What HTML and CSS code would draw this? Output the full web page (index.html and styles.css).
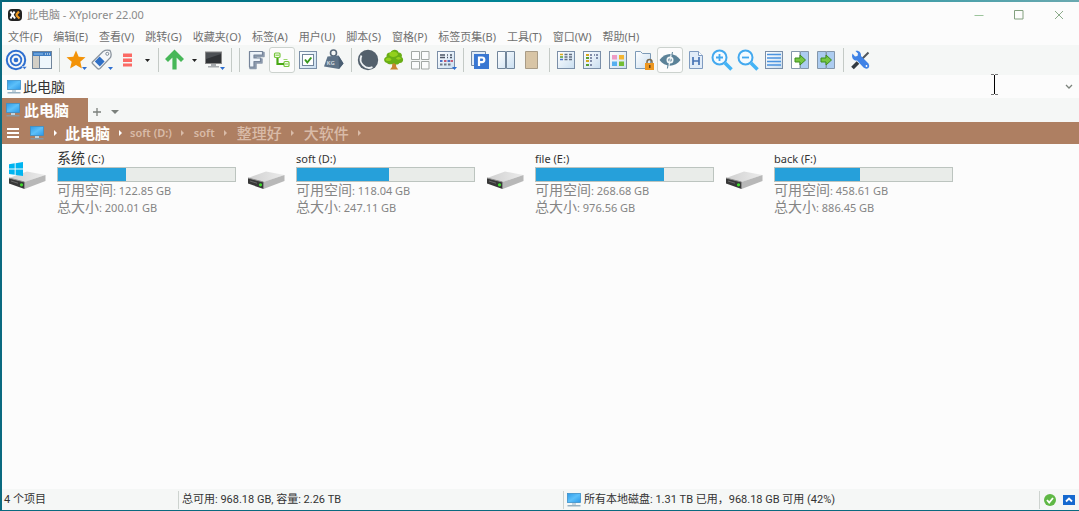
FILE: index.html
```html
<!DOCTYPE html>
<html lang="zh-CN">
<head>
<meta charset="utf-8">
<title>此电脑 - XYplorer 22.00</title>
<link rel="stylesheet" href="styles.css">
</head>
<body>
<svg class="defs" aria-hidden="true">
  <defs>
    <linearGradient id="g-screen" x1="0" y1="0" x2="1" y2="1"><stop offset="0" stop-color="#2f9be8"/><stop offset=".5" stop-color="#5cc0fa"/><stop offset="1" stop-color="#2b98e8"/></linearGradient>
    <linearGradient id="g-page" x1="0" y1="0" x2="1" y2="1"><stop offset="0" stop-color="#fff"/><stop offset="1" stop-color="#c9def0"/></linearGradient>
    <linearGradient id="g-top" x1="0" y1="0" x2="1" y2="0"><stop offset="0" stop-color="#cfcfcf"/><stop offset="1" stop-color="#ececec"/></linearGradient>
    <symbol id="pc" viewBox="0 0 16 16"><rect x="1.500" y="1.500" width="13" height="9" fill="url(#g-screen)" stroke="#3c8fc8" stroke-width=".8"/><path d="M6 11h4v2H6z" fill="#c2d2dc"/><path d="M1.500 13.800h13" stroke="#7f9fb4" stroke-width="1.200"/></symbol>
    <symbol id="drive" viewBox="0 0 40 32"><path d="M2 17 20 10.500 38.500 14 18 21z" fill="url(#g-top)"/><path d="M17.500 21 38.500 14V20L17.500 28z" fill="#b8b8b8"/><path d="M2 17 17.500 21V28L2 22.500z" fill="#383838"/><path d="M2 17 17.500 21" stroke="#8c8c8c"/><path d="M4 20l7 2.200" stroke="#6a6a6a"/><circle cx="14.500" cy="23.800" r="1.600" fill="#3fdc2e"/></symbol>
    <symbol id="winmark" viewBox="0 0 14 14"><path fill="#00b4f0" d="M0 2.200 5.700 1.300V6.600H0zM6.600 1.200 14 0V6.600H6.600zM0 7.500H5.700V12.700L0 12zM6.600 7.500H14V14L6.600 12.900z"/></symbol>
    <symbol id="page" viewBox="0 0 22 22"><rect x="2.500" y="2.500" width="17" height="17" fill="url(#g-page)" stroke="#7b8fa8"/></symbol>
  </defs>
</svg>
<div class="window">
  <header class="titlebar">
    <svg class="logo" viewBox="0 0 14 14"><rect y="1" width="14" height="12" rx="4" fill="#222"/><path d="M2.500 3.500 7 10.500M6.500 3.500 2.500 10.500" stroke="#fff" stroke-width="2"/><path d="M8 7 11 3.500M8 7l3.500 3.500" stroke="#f09a20" stroke-width="2.200"/></svg>
    <h1>此电脑 - XYplorer 22.00</h1>
    <div class="caption">
      <button aria-label="最小化"><svg viewBox="0 0 10 10"><path d="M.5 5.500h9" stroke="#9cc49c"/></svg></button>
      <button aria-label="最大化"><svg viewBox="0 0 10 10"><path d="M.5 .5h8.500v8.500H.5z" fill="none" stroke="#83a07f"/></svg></button>
      <button aria-label="关闭"><svg viewBox="0 0 10 10"><path d="m1 1 8 8m0-8L1 9" stroke="#8cab8a"/></svg></button>
    </div>
  </header>
  <nav class="menu">
    <button>文件(F)</button><button>编辑(E)</button><button>查看(V)</button><button>跳转(G)</button><button>收藏夹(O)</button><button>标签(A)</button><button>用户(U)</button><button>脚本(S)</button><button>窗格(P)</button><button>标签页集(B)</button><button>工具(T)</button><button>窗口(W)</button><button>帮助(H)</button>
  </nav>
  <div class="toolbar" role="toolbar">
    <button aria-label="定位"><svg viewBox="0 0 22 22"><g fill="none" stroke="#2e6fd0"><circle cx="11" cy="11" r="9.200" stroke-width="2"/><circle cx="11" cy="11" r="5.300" stroke-width="1.800"/></g><circle cx="11" cy="11" r="2.300" fill="#2e6fd0"/><path d="M17 17.500h5l-2.500 3z" fill="#2e6fd0" stroke="#fff" stroke-width=".5"/></svg></button>
    <button aria-label="面板"><svg viewBox="0 0 22 22"><rect x="1.500" y="2.500" width="19" height="17" fill="#eef6fc" stroke="#71859b"/><path d="M2 3h18v4H2z" fill="#3f7ec4"/><path d="M3 5h9" stroke="#8fc0f0"/><path d="M14 5h1m1 0h1m1 0h1" stroke="#fff"/><path d="M2 7h6v12H2z" fill="#d3cfc6"/><path d="M8.500 7v12" stroke="#71859b"/></svg></button>
    <i class="sep"></i>
    <button aria-label="收藏"><svg viewBox="0 0 22 22"><path d="m11 1.500 2.700 6.200 6.800.6-5.200 4.500 1.600 6.700-5.900-3.600-5.900 3.600 1.600-6.700L1.500 8.300l6.800-.6z" fill="#f39308"/><path d="M17 18h5l-2.500 3z" fill="#2e6fd0"/></svg></button>
    <button aria-label="标签"><svg viewBox="0 0 22 22"><path d="M1.500 13 12 2.500Q15 .500 19 1.500 21 5 19.500 8.500L9 19.500Q7.500 20.500 6.500 19.500L1.500 14.500Q.800 13.700 1.500 13z" fill="#f5f7f9" stroke="#8a949e" stroke-width="1.300"/><path d="m3.800 12.500 4.800-5 5 5-4.800 5z" fill="#2f6fc6"/><circle cx="16.300" cy="4.800" r="1.500" fill="#fff" stroke="#7b8794"/><path d="M17 18h5l-2.500 3z" fill="#2e6fd0"/></svg></button>
    <button aria-label="列表"><svg viewBox="0 0 22 22"><path d="M6 4.500h9v3.500H6zM6 9.500h9v3.500H6zM6 14.500h9v3H6z" fill="#fb6a64"/></svg></button>
    <button class="drop" aria-label="列表选项"><svg viewBox="0 0 5 3"><path d="M0 0h5L2.500 3z" fill="#222"/></svg></button>
    <i class="sep"></i>
    <button aria-label="向上"><svg viewBox="0 0 22 22"><path d="m2.500 11.500 8-8 8 8M10.500 5v15.500" fill="none" stroke="#47b758" stroke-width="4.200"/></svg></button>
    <button class="drop" aria-label="向上选项"><svg viewBox="0 0 5 3"><path d="M0 0h5L2.500 3z" fill="#222"/></svg></button>
    <button aria-label="显示器"><svg viewBox="0 0 22 22"><rect x="2.500" y="3" width="16" height="11.500" fill="#4c5054" stroke="#888"/><path d="M3 10 18 5v9H3z" fill="#303336"/><path d="M8 15h5v2h3v1.500H5V17h3z" fill="#a7abae"/><path d="M17 18h5l-2.500 3z" fill="#2e6fd0"/></svg></button>
    <i class="sep"></i><i class="sep"></i>
    <button aria-label="过滤"><svg viewBox="0 0 22 22"><path d="M6 3.500h13v4H11V10h6v4h-6v5.500H5V5z" fill="#8d9bad" stroke="#8d9bad" stroke-width="1.500" stroke-linejoin="round"/><path d="M4.500 2.500h13v3.500H9v3h6.500v3.500H9V18H4.500z" fill="#eff5fa" stroke="#76859a" stroke-width="1.200" stroke-linejoin="round"/></svg></button>
    <button class="pressed" aria-label="树"><svg viewBox="0 0 22 22"><g fill="#f3fbea" stroke="#76c63c" stroke-width="1.200"><rect x="3.500" y="4" width="5.500" height="4.500" rx="1"/><rect x="13" y="12.500" width="5" height="5" rx="1"/></g><path d="M4.500 6.200h3.500M14 15h3" stroke="#76c63c"/><path d="M6.500 9v6H13" fill="none" stroke="#48a815" stroke-width="2.200"/><path d="M12.500 10.500h4" stroke="#9ad66c"/></svg></button>
    <button aria-label="复选框"><svg viewBox="0 0 22 22"><use href="#page"/><rect x="5.500" y="5.500" width="11" height="11" fill="#fff" stroke="#71859b"/><path d="m8 10.500 2.300 3 4-5" fill="none" stroke="#38981e" stroke-width="2"/></svg></button>
    <button aria-label="大小"><svg viewBox="0 0 22 22"><circle cx="10.500" cy="4" r="3" fill="none" stroke="#58697a" stroke-width="1.600"/><path d="M4.500 7.500 15.500 6.500 20.500 14.500 16 20 1 17.500z" fill="#5d7287"/><path d="m15.500 6.500 5 8L16 20z" fill="#4a5e72"/><text class="kg" x="3.500" y="15.500">KG</text></svg></button>
    <i class="sep"></i>
    <button aria-label="深色模式"><svg viewBox="0 0 22 22"><circle cx="11" cy="11" r="10.200" fill="#53606c"/><path d="M4.500 6.500A8.600 8.600 0 0 0 15.500 18.200" fill="none" stroke="#eef2f5" stroke-width="1.800"/></svg></button>
    <button aria-label="文件夹树"><svg viewBox="0 0 22 22"><path d="M9.500 12h3l.800 6 2 2.500H7l2-2.500z" fill="#c88332"/><path d="M4 14c-4-1-3.500-5.500-.5-6C3 4 6 3 7.500 3.500 9-.5 15 0 15.500 3.500 19 3.500 19.500 7 18.500 8c3 1.500 1.500 6.500-2 6-2 2.500-4.500 1.500-5.500 0-2 2-6 1.500-7 0z" fill="#69ae16"/><path d="M6 5.500c1-4 8-4 9 0-1 3-8 3.500-9 0zM2.500 10.500c1-2.500 5-2.500 6 0-1 2-5 2-6 0zM13 9.500c1-2 4-2 5 0-1 1.500-4 1.500-5 0z" fill="#93d01c"/></svg></button>
    <button aria-label="网格"><svg viewBox="0 0 22 22"><path d="M2.500 2.500h8v8h-8zM12.500 2.500h7.500v8h-7.500zM2.500 12.500h8V20h-8zM12.500 12.500h7.500V20h-7.500z" fill="#fbfcfc" stroke="#a3a8a5"/></svg></button>
    <button aria-label="日历"><svg viewBox="0 0 22 22"><use href="#page"/><path d="M5 6h5M5 8.500h5M12 6h1m2 0h2M12 8.500h1m2 0h2" stroke="#4b5565" stroke-width="1.300"/><path d="M5 12h2.500m5 0H15" stroke="#4a70c8" stroke-width="2"/><path d="M9 12h2.500m4 0H18" stroke="#c45e76" stroke-width="2"/><path d="M5 15.500h2.500M9 15.500h2.500M13 15.500h2.500" stroke="#6d7888" stroke-width="2"/><path d="M17 18h5l-2.500 3z" fill="#2e6fd0"/></svg></button>
    <i class="sep"></i>
    <button aria-label="预览"><svg viewBox="0 0 22 22"><path d="M2.500 2.500h14v14h-14z" fill="#e1ebf5" stroke="#748ba6"/><path d="M5 5h15v15H5z" fill="#3977d2"/><path d="M10 17V8.500h3a2.300 2.300 0 0 1 0 4.600H10" fill="none" stroke="#fff" stroke-width="2.200"/></svg></button>
    <button aria-label="双窗格"><svg viewBox="0 0 22 22"><path d="M2.500 2.500h8v17h-8zM11.500 2.500h8v17h-8z" fill="url(#g-page)" stroke="#71859b"/></svg></button>
    <button aria-label="颜色"><svg viewBox="0 0 22 22"><path d="M4.500 2.500h12v17h-12z" fill="#d8c5a6" stroke="#a99c87"/></svg></button>
    <i class="sep"></i>
    <button aria-label="详细信息"><svg viewBox="0 0 22 22"><use href="#page"/><path d="M5 5.500h3" stroke="#e0a91d" stroke-width="1.500"/><path d="M5 8h3" stroke="#599f32" stroke-width="1.500"/><path d="M5 10.500h3" stroke="#4a70c8" stroke-width="1.500"/><path d="M9.500 5.500h3m1.500 0h3M9.500 8h3M14 8h3M9.500 10.500h3m1.500 0h3" stroke="#626e80" stroke-width="1.300"/></svg></button>
    <button aria-label="列表视图"><svg viewBox="0 0 22 22"><use href="#page"/><path d="M5 6h3m-3 6h3" stroke="#d6a61d" stroke-width="2"/><path d="M5 9h3m-3 7h3" stroke="#599f32" stroke-width="2"/><path d="M9 6h2M9 9h2M9 12h2M9 16h2M13 6h1m1 0h2M15 9h2" stroke="#626e90" stroke-width="1.400"/></svg></button>
    <button aria-label="缩略图"><svg viewBox="0 0 22 22"><use href="#page"/><path d="M5 6h5v4.500H5z" fill="#ee9bc5"/><path d="M12 6h5v4.500h-5z" fill="#f3b532"/><path d="M5 12.500h5V17H5z" fill="#55aff0"/><path d="M12 12.500h5V17h-5z" fill="#73bd35"/></svg></button>
    <button aria-label="锁定文件夹"><svg viewBox="0 0 22 22"><path d="M2.500 2.500h5l2 2h8v15h-15z" fill="url(#g-page)" stroke="#7c9ab7"/><path d="M14 15v-2a2.500 2.500 0 0 1 5 0v2" fill="none" stroke="#776a52" stroke-width="1.500"/><path d="M12 14h9v7h-9z" fill="#ed9720"/><path d="M16 16h1.500v3H16z" fill="#69451a"/></svg></button>
    <button class="pressed" aria-label="显示隐藏项"><svg viewBox="0 0 22 22"><path d="M.5 11C6 3 16 3 21.500 11 16 18.500 6 18.500.5 11z" fill="#5b8298"/><circle cx="11" cy="11" r="3.500" fill="#f3f7f8"/><circle cx="11" cy="11" r="1.800" fill="#5b8298"/><path d="m12.500 3.500-3 15.500" stroke="#f3f7f8" stroke-width="1.200"/><path d="m13.500 3-.6 3M9 16l-.6 3.500" stroke="#5b8298"/></svg></button>
    <button aria-label="十六进制"><svg viewBox="0 0 22 22"><path d="M4.500 2.500h9l4 4v13h-13z" fill="#e1ecf8" stroke="#7f9bc0"/><path d="M13.500 2.500v4h4" fill="#fff" stroke="#7f9bc0"/><path d="M8 8v8m6-8v8m-6-4h6" stroke="#4774b5" stroke-width="1.700"/></svg></button>
    <button aria-label="放大"><svg viewBox="0 0 22 22"><circle cx="8.500" cy="8.500" r="7" fill="#f5fbff" stroke="#43a9ef" stroke-width="2"/><path d="M8.500 5v7M5 8.500h7" stroke="#43a9ef" stroke-width="1.800"/><path d="m14 14 6.500 6.500" stroke="#43b4f6" stroke-width="3.500"/></svg></button>
    <button aria-label="缩小"><svg viewBox="0 0 22 22"><circle cx="8.500" cy="8.500" r="7" fill="#f5fbff" stroke="#43a9ef" stroke-width="2"/><path d="M5 8.500h7" stroke="#43a9ef" stroke-width="1.800"/><path d="m14 14 6.500 6.500" stroke="#43b4f6" stroke-width="3.500"/></svg></button>
    <button aria-label="行"><svg viewBox="0 0 22 22"><use href="#page"/><path d="M4 5.500h14M4 9h14M4 12.500h14M4 16h14" stroke="#4a93df" stroke-width="1.400"/></svg></button>
    <button aria-label="移到窗格"><svg viewBox="0 0 22 22"><path d="M2.500 2.500h8.500v17H2.500z" fill="#fff" stroke="#8497ab"/><path d="M11.500 2.500h8v17h-8z" fill="#acccf0" stroke="#8497ab"/><path d="M6 9h5V6l5.500 5-5.500 5v-3H6z" fill="#76c742" stroke="#3d8d1e"/></svg></button>
    <button aria-label="复制到窗格"><svg viewBox="0 0 22 22"><path d="M2.500 2.500h8.500v17H2.500zM11.500 2.500h8v17h-8z" fill="#acccf0" stroke="#8497ab"/><path d="M6 9h5V6l5.500 5-5.500 5v-3H6z" fill="#76c742" stroke="#3d8d1e"/></svg></button>
    <i class="sep"></i>
    <button aria-label="配置"><svg viewBox="0 0 22 22"><path d="m19.500 3.500-7 7" stroke="#50565c" stroke-width="2"/><path d="m9 13.500-5.500 5.500" stroke="#343b42" stroke-width="3.800"/><path d="M3.500 4.500 6 7.500 8.500 7 9 4.500 6.500 2C9.500 1 12.500 3.500 12 7L19.500 14.500Q21 17 19.500 19 17 20.500 14.500 18.500L8 11.500C4.500 12 2 8.500 3.500 4.500z" fill="#3f82e6"/><circle cx="17.500" cy="17" r=".9" fill="#fff"/></svg></button>
  </div>
  <div class="address">
    <svg class="pc" aria-hidden="true"><use href="#pc"/></svg>
    <input type="text" value="此电脑" aria-label="地址">
    <button class="chev" aria-label="历史"><svg viewBox="0 0 8 6"><path d="m1 1 3 3 3-3" fill="none" stroke="#7c837c" stroke-width="1.300"/></svg></button>
    <svg class="cursor" viewBox="0 0 7 21" aria-hidden="true"><path d="M0 .5h3m1 0h3M0 20.500h3m1 0h3" stroke="#777"/><path d="M3.500 1v19" stroke="#000"/></svg>
  </div>
  <div class="tabs">
    <button class="tab"><svg class="pc" aria-hidden="true"><use href="#pc"/></svg>此电脑</button>
    <button class="newtab" aria-label="新标签页"><svg viewBox="0 0 8 8"><path d="M4 0v8M0 4h8" stroke="#7b807c" stroke-width="1.300"/></svg></button>
    <button class="newtab" aria-label="标签页列表"><svg viewBox="0 0 8 8"><path d="M0 2h8L4 6z" fill="#7b807c"/></svg></button>
  </div>
  <nav class="crumbs">
    <button class="burger" aria-label="菜单"><svg viewBox="0 0 12 10"><path d="M0 1h12M0 5h12M0 9h12" stroke="#fff" stroke-width="2"/></svg></button>
    <svg class="pc" aria-hidden="true"><use href="#pc"/></svg>
    <i class="arrow on"></i><a class="on cjk" href="#pc">此电脑</a>
    <i class="arrow on"></i><a href="#d">soft (D:)</a>
    <i class="arrow"></i><a href="#soft">soft</a>
    <i class="arrow"></i><a class="cjk" href="#a">整理好</a>
    <i class="arrow"></i><a class="cjk" href="#b">大软件</a>
    <i class="arrow"></i>
  </nav>
  <main class="drives">
    <article class="drive"><div class="pic"><svg class="disk"><use href="#drive"/></svg><svg class="mark"><use href="#winmark"/></svg></div><div class="info"><h2><b>系统</b> (C:)</h2><div class="bar"><span style="width:38.6%"></span></div><p><b>可用空间</b>: 122.85 GB</p><p><b>总大小</b>: 200.01 GB</p></div></article>
    <article class="drive"><div class="pic"><svg class="disk"><use href="#drive"/></svg></div><div class="info"><h2>soft (D:)</h2><div class="bar"><span style="width:52.2%"></span></div><p><b>可用空间</b>: 118.04 GB</p><p><b>总大小</b>: 247.11 GB</p></div></article>
    <article class="drive"><div class="pic"><svg class="disk"><use href="#drive"/></svg></div><div class="info"><h2>file (E:)</h2><div class="bar"><span style="width:72.5%"></span></div><p><b>可用空间</b>: 268.68 GB</p><p><b>总大小</b>: 976.56 GB</p></div></article>
    <article class="drive"><div class="pic"><svg class="disk"><use href="#drive"/></svg></div><div class="info"><h2>back (F:)</h2><div class="bar"><span style="width:48.3%"></span></div><p><b>可用空间</b>: 458.61 GB</p><p><b>总大小</b>: 886.45 GB</p></div></article>
  </main>
  <footer class="status">
    <span class="count">4 个项目</span>
    <span class="total">总可用: 968.18 GB, 容量: 2.26 TB</span>
    <span class="used"><svg class="pc" aria-hidden="true"><use href="#pc"/></svg>所有本地磁盘: 1.31 TB 已用，968.18 GB 可用 (42%)</span>
    <span class="tray">
      <svg class="ok" viewBox="0 0 12 12"><circle cx="6" cy="6" r="6" fill="#5fb845"/><path d="m3 6 2.200 2.500L9 4" fill="none" stroke="#fff" stroke-width="1.800"/></svg>
      <button aria-label="信息面板"><svg viewBox="0 0 12 10"><path d="M0 0h12v10H0z" fill="#1569cf"/><path d="m3 6.500 3-3 3 3" fill="none" stroke="#fff" stroke-width="1.800"/></svg></button>
    </span>
  </footer>
</div>
</body>
</html>
```
FILE: styles.css
```css
* { box-sizing: border-box; }
body {
  margin: 0;
  font: 11px/16px "Noto Sans", "Noto Sans CJK SC", sans-serif;
  color: #333;
}
button, input { font: inherit; color: inherit; background: none; border: 0; padding: 0; }
svg { display: block; flex: none; }
.defs { position: absolute; width: 0; height: 0; }
.window {
  display: flex;
  flex-direction: column;
  min-height: 100vh;
  background: linear-gradient(90deg, #04667a, #008c9c 60%, #6aa9b0);
  border: solid #0a6a80;
  border-width: 0 0 1px 2px;
  padding: 2px 0 0;
}
.titlebar { display: flex; align-items: center; gap: 5px; height: 26px; padding-left: 6px; background: #fcfcfc; }
.logo { width: 14px; height: 14px; }
h1 { margin: 0; font-size: 11px; font-weight: 400; color: #8a8a8a; flex: 1; }
.caption { display: flex; }
.caption button { display: flex; align-items: center; justify-content: center; width: 40px; height: 26px; }
.caption svg { width: 10px; height: 10px; }
.menu { display: flex; gap: 11px; height: 17px; padding-left: 6px; background: #fcfcfc; color: #707070; }
.menu button { white-space: nowrap; }
.toolbar { display: flex; align-items: center; height: 30px; padding-left: 1px; background: #f5f7f6; }
.toolbar button { display: flex; align-items: center; justify-content: center; width: 26px; height: 26px; flex: none; border-radius: 3px; }
.toolbar svg { width: 22px; height: 22px; }
.toolbar .drop { width: 13px; }
.toolbar .drop svg { width: 5px; height: 3px; }
.toolbar .pressed { background: #fcfcfc; border: 1px solid #ccd2ce; }
.sep { display: flex; justify-content: center; width: 8px; height: 24px; flex: none; }
.sep::before { content: ""; width: 1px; background: #c4cac6; }
.kg { font: bold 6px "Open Sans", sans-serif; fill: #c9d2da; }
.pc { width: 16px; height: 16px; }
.address { position: relative; display: flex; align-items: center; gap: 1px; height: 23px; padding: 0 6px 0 4px; background: #fcfcfc; }
.address input { flex: 1; min-width: 0; height: 22px; font-size: 14px; padding-bottom: 2px; outline: 0; }
.chev svg { width: 8px; height: 6px; }
.cursor { position: absolute; right: 81px; top: -1px; width: 7px; height: 21px; }
.tabs { display: flex; align-items: center; height: 24px; background: #f5f7f6; }
.tab { display: flex; align-items: center; gap: 3px; width: 86px; height: 24px; padding-left: 3px; background: #ae7f62; color: #fff; font-size: 15px; font-weight: 700; }
.newtab { display: flex; align-items: center; justify-content: center; width: 18px; height: 24px; padding-top: 4px; }
.newtab svg { width: 8px; height: 8px; }
.crumbs { display: flex; align-items: center; height: 22px; padding-left: 5px; background: #ae7f62; color: #d9bba8; }
.crumbs a { color: inherit; font-size: 11px; font-weight: 600; text-decoration: none; white-space: nowrap; }
.crumbs .cjk { font-size: 15px; font-weight: 500; }
.crumbs a.on { color: #fff; font-weight: 700; }
.burger { margin-right: 10px; }
.burger svg { width: 12px; height: 10px; }
.arrow { display: flex; justify-content: center; width: 22px; flex: none; }
.arrow::before { content: ""; border: solid transparent; border-width: 3px 0 3px 3px; border-left-color: #d9bba8; }
.arrow.on { width: 20px; }
.arrow.on::before { border-left-color: #fff; }
.drives { flex: 1; display: flex; flex-wrap: wrap; align-content: flex-start; padding: 6px 0 0 5px; background: #fcfcfc; }
.drive { display: flex; gap: 10px; width: 239px; }
.pic { position: relative; width: 40px; padding-top: 11px; }
.disk { width: 40px; height: 32px; }
.mark { position: absolute; left: 2px; top: 12px; width: 14px; height: 14px; }
.info { width: 179px; white-space: nowrap; }
.info b { font-size: 14px; line-height: 12px; font-weight: 400; }
h2 { margin: 0; height: 17px; font-size: 11px; line-height: 17px; font-weight: 400; color: #333; }
.bar { height: 15px; border: 1px solid #bcc4bf; background: #e9ece9; }
.bar span { display: block; height: 100%; background: #26a0da; }
.info p { margin: 0; height: 17px; line-height: 17px; color: #858585; }
.status { display: flex; align-items: center; height: 21px; background: #f5f7f6; white-space: nowrap; font-family: "Liberation Sans Narrow", Roboto, "Noto Sans CJK SC", sans-serif; }
.status > span { display: flex; align-items: center; height: 18px; }
.count { width: 176px; padding-left: 2px; }
.total { width: 385px; padding-left: 3px; border-left: 1px solid #cdd3cf; }
.used { flex: 1; gap: 2px; padding-left: 2px; border-left: 1px solid #cdd3cf; }
.tray { gap: 7px; padding: 0 4px; border-left: 1px solid #cdd3cf; }
.ok { width: 12px; height: 12px; }
.tray button svg { width: 12px; height: 10px; }
```
